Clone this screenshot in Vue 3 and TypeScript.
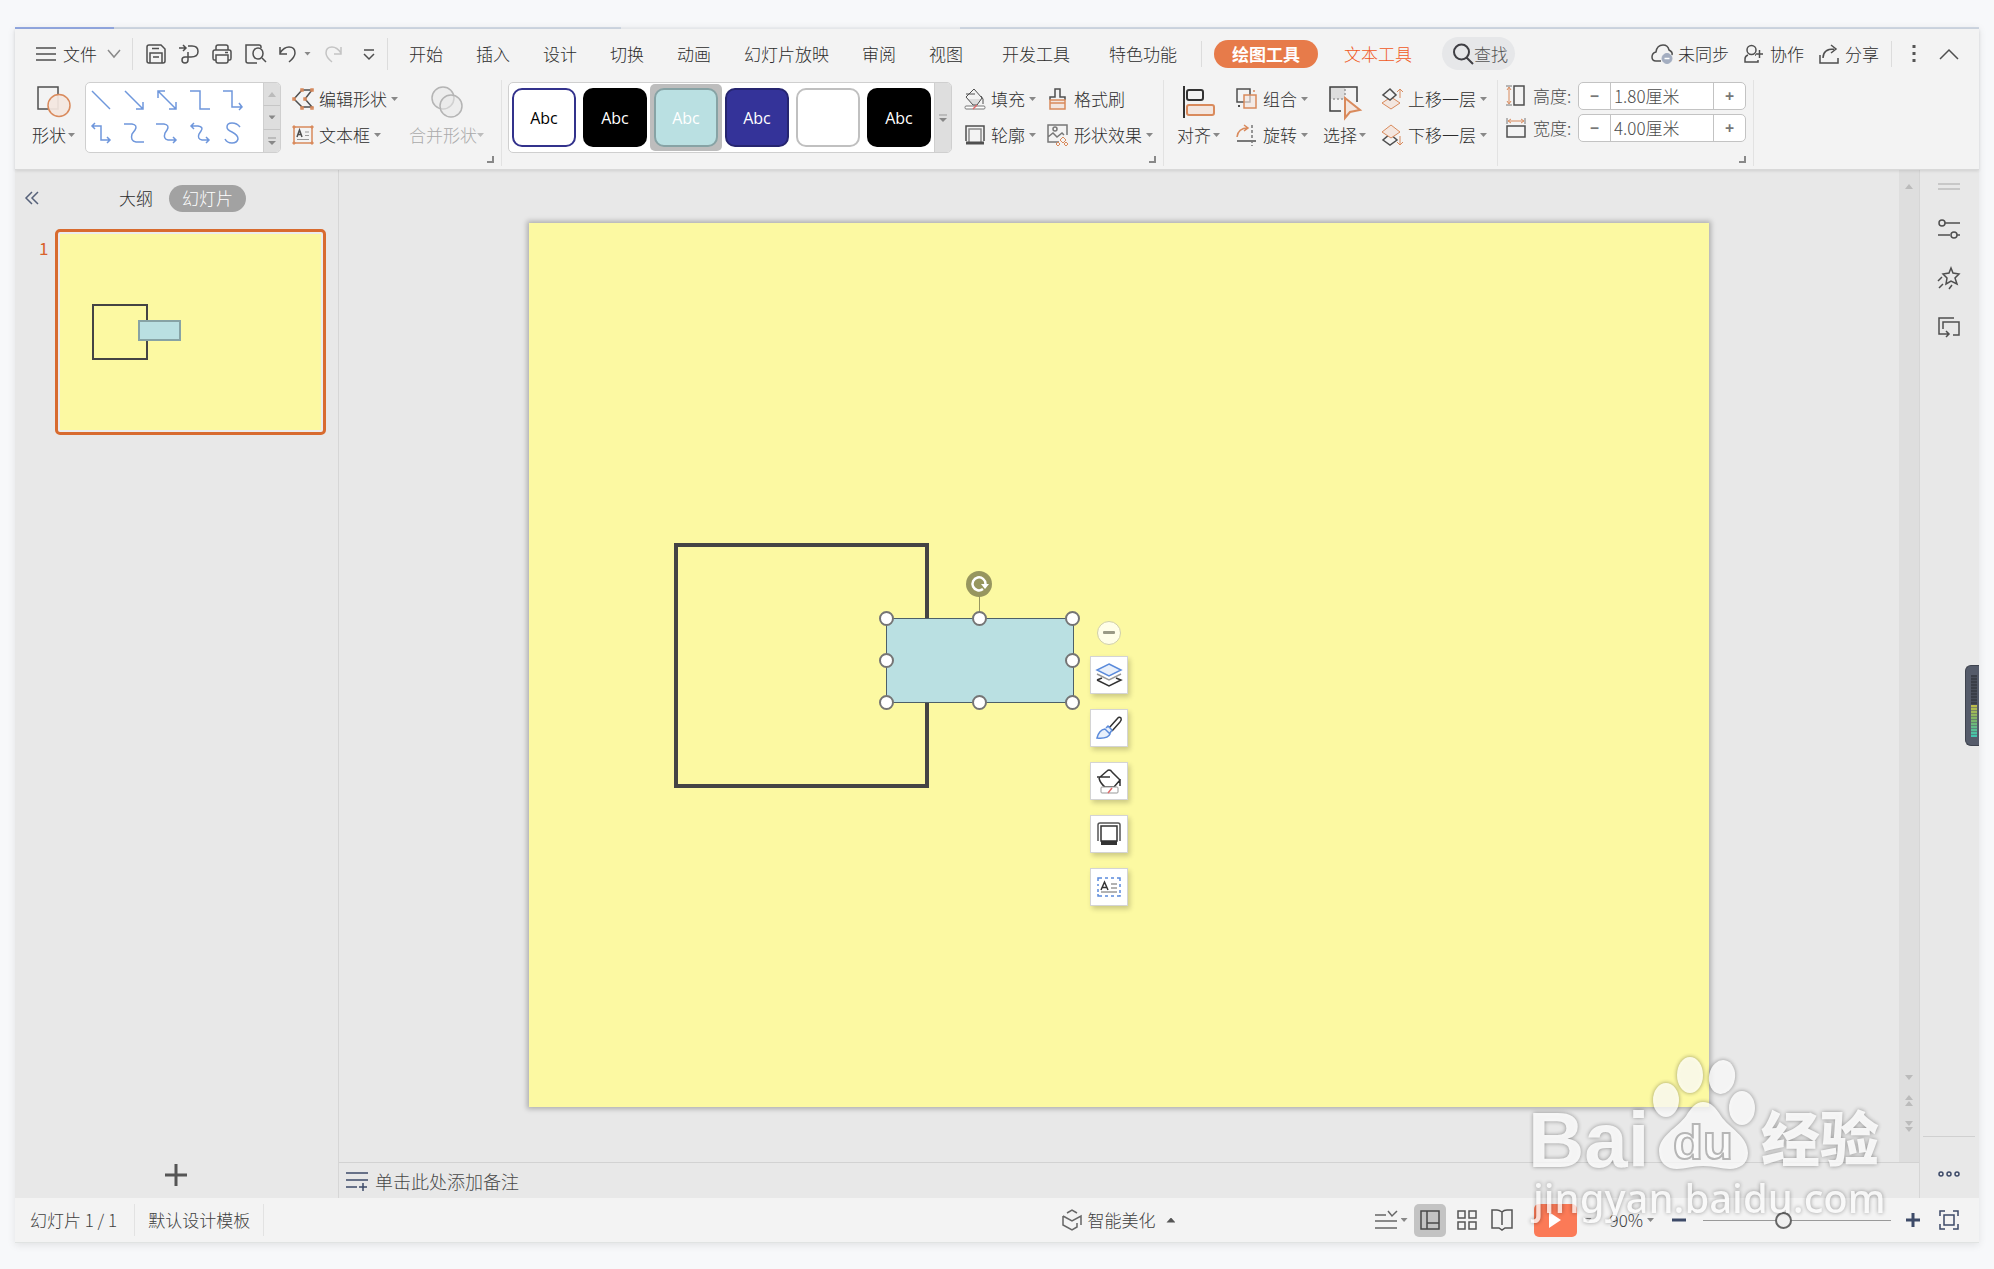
<script setup lang="ts">
import { h, ref } from 'vue'

type Shape = { d: string; s?: string; f?: string; w?: number; dash?: string }
type Glyph = { w: number; h: number; p: Shape[] }

const ink = '#4f4f4f'
const navy = '#3d4a68'
const org = '#d98a5c'
const blush = '#f3e6df'
const blue = '#6f97dc'
const dim = '#b4b4b4'

const glyphs: Record<string, Glyph> = {
  menu: { w: 20, h: 16, p: [{ d: 'M0 2H20M0 8H20M0 14H20' }] },
  chevDown: { w: 14, h: 10, p: [{ d: 'M1 1L7 8L13 1', s: '#8a8a8a' }] },
  save: { w: 20, h: 20, p: [{ d: 'M3 1H15L19 5V17Q19 19 17 19H3Q1 19 1 17V3Q1 1 3 1ZM4 19V9H16V19M6 4.500H13M7 13H13' }] },
  export: { w: 20, h: 20, p: [{ d: 'M0 4H7M4 1L7 4L4 7M9 2H13Q19 2 19 7.500Q19 13 12 13H6Q3 13 3 16Q3 19 6 19Q9 19 9 16V8' }] },
  print: { w: 20, h: 20, p: [{ d: 'M4 6V3Q4 1 6 1H14Q16 1 16 3V6M4 16H2Q1 16 1 14V8Q1 6 3 6H17Q19 6 19 8V14Q19 16 18 16H16M4 11H16V17Q16 19 14 19H6Q4 19 4 17ZM13 8.500H16' }] },
  preview: { w: 21, h: 20, p: [{ d: 'M16 4V3Q16 1 14 1H1V17Q1 19 3 19H12M17 14L21 18' }, { d: 'M8 9.500A5 5.500 0 1 0 18 9.500A5 5.500 0 1 0 8 9.500Z' }] },
  undo: { w: 18, h: 18, p: [{ d: 'M1 2V9H8M1 8Q5 2 10 2Q16 2 16 8Q16 12 10 17' }] },
  redo: { w: 18, h: 18, p: [{ d: 'M17 2V9H10M17 8Q13 2 8 2Q2 2 2 8Q2 12 8 17', s: '#c4c4c4' }] },
  more: { w: 12, h: 12, p: [{ d: 'M1 2H11M1 6L6 11L11 6' }] },
  search: { w: 22, h: 22, p: [{ d: 'M2 9A7.500 7.500 0 1 0 17 9A7.500 7.500 0 1 0 2 9ZM14.500 14.500L21 21', s: '#3f3f44', w: 2 }] },
  cloud: { w: 23, h: 20, p: [{ d: 'M10 17H5Q1 17 1 13Q1 9 5 8Q6 1 12 1Q17 1 18 6Q22 8 21 11' }, { d: 'M11 14.500A5 5 0 1 0 21 14.500A5 5 0 1 0 11 14.500Z', s: '#a3adc0', f: '#a3adc0', w: 1 }, { d: 'M13.500 14.500H18.500', s: '#fff' }] },
  collab: { w: 19, h: 20, p: [{ d: 'M3 6A4.500 4.500 0 1 0 12 6A4.500 4.500 0 1 0 3 6ZM4 11Q1 12 1 15V18H14V16M11 11H12M15.500 6V14M12 10H19' }] },
  share: { w: 20, h: 20, p: [{ d: 'M1 11V19H19V14M4 14Q4 5 15 5M12 1L17 5L12 9' }] },
  kebab: { w: 4, h: 18, p: [{ d: 'M2 0V3M2 7V10M2 14V17', w: 3, s: '#555' }] },
  chevUp: { w: 20, h: 12, p: [{ d: 'M1 11L10 2L19 11' }] },
  shape: { w: 34, h: 32, p: [{ d: 'M1 1H21V23H1Z' }, { d: 'M11 19.500A11 11 0 1 0 33 19.500A11 11 0 1 0 11 19.500Z', s: org, f: '#f3e6dfee' }] },
  editShape: { w: 22, h: 22, p: [{ d: 'M10 2H20L13 11L20 19H10L2 11Z' }, { d: 'M9 1H11V3H9ZM19 1H21V3H19ZM1 10H3V12H1ZM12 10H14V12H12ZM9 19H11V21H9ZM19 19H21V21H19Z', s: org }] },
  textBox: { w: 22, h: 20, p: [{ d: 'M2 2H20V18H2Z', s: org }, { d: 'M1 1H3V3H1ZM19 1H21V3H19ZM1 17H3V19H1ZM19 17H21V19H19Z', s: org, f: org, w: 1 }, { d: 'M5 12L7.500 5L10 12M6 9.500H9' }, { d: 'M13 7H17M13 10.500H17M5 14.500H17', s: '#999', w: 1 }] },
  merge: { w: 32, h: 32, p: [{ d: 'M1 12A11 11 0 1 0 23 12A11 11 0 1 0 1 12Z', s: dim, f: '#e8e8e888' }, { d: 'M9 20A11 11 0 1 0 31 20A11 11 0 1 0 9 20Z', s: dim, f: '#e8e8e888' }] },
  fill: { w: 22, h: 22, p: [{ d: 'M3 11H18L13 17H9Z', s: 'none', f: '#ddd' }, { d: 'M10 1L2 9L9 17H13L18 10ZM2 6H11M17 8Q20 10 19 16', w: 1 }, { d: 'M2 18H20Q21 18 21 19.500Q21 21 20 21H2Q1 21 1 19.500Q1 18 2 18Z', s: '#777', f: '#fff', w: 1 }, { d: 'M9 21L13 17', s: '#e06a6a' }] },
  brush: { w: 22, h: 22, p: [{ d: 'M3 12V9H8V1H13V9H18V12' }, { d: 'M3 12H18V21H3ZM3 15H18', s: org, f: blush }] },
  outline: { w: 22, h: 20, p: [{ d: 'M2 16V1H20V16' }, { d: 'M5 17V4H17V17', s: '#888' }, { d: 'M2 18H20', w: 3 }] },
  effect: { w: 22, h: 22, p: [{ d: 'M12 18H1V1H20V11M1 13L6 9L10 13L15 9L17 11', s: '#777' }, { d: 'M6 5A2 2 0 1 0 10 5A2 2 0 1 0 6 5Z', s: '#777' }, { d: 'M16 13L19 16L16 19L13 16ZM11 18L13 20L11 22L9 20ZM19 18L21 20L19 22L17 20Z', s: org, w: 1 }] },
  align: { w: 32, h: 34, p: [{ d: 'M1 1V33', w: 2, s: '#333' }, { d: 'M6 5H18Q20 5 20 7V13Q20 15 18 15H6Q4 15 4 13V7Q4 5 6 5Z', s: '#333', w: 2 }, { d: 'M6 20H29Q31 20 31 22V28Q31 30 29 30H6Q4 30 4 28V22Q4 20 6 20Z', s: org, f: blush, w: 2 }] },
  group: { w: 22, h: 22, p: [{ d: 'M1 1H14V14H1Z' }, { d: 'M8 7H20V20H8Z', s: org, f: '#f3e6dfaa' }, { d: 'M18 2V4', s: org }, { d: 'M3 17V19', w: 2 }] },
  rotate: { w: 22, h: 22, p: [{ d: 'M1 13Q2 4 12 4M8 1L12 4L8 7', s: org }, { d: 'M1 17H20' }, { d: 'M16 1V22', s: '#777', dash: '3 2' }] },
  select: { w: 34, h: 34, p: [{ d: 'M2 2H17V14H2Z', s: 'none', f: '#ddd' }, { d: 'M13 26H2V2H29V17', s: '#3f3f3f' }, { d: 'M17 4V14H3', s: '#999', dash: '2 2' }, { d: 'M17 13V33L22 27L32 25Z', s: org, f: blush, w: 2 }] },
  forward: { w: 22, h: 22, p: [{ d: 'M10 9L19 15L10 21L1 15Z', s: org, f: blush, w: 1 }, { d: 'M9 1L15 7L9 12L2 7Z', f: '#f3f3f3' }, { d: 'M19 10V1M16 4L19 1L22 4', s: org, w: 1 }] },
  backward: { w: 22, h: 22, p: [{ d: 'M9 10L16 16L9 21L2 16Z' }, { d: 'M10 1L19 8L10 14L1 8Z', s: org, f: blush, w: 1 }, { d: 'M19 12V21M16 18L19 21L22 18', s: org, w: 1 }] },
  height: { w: 20, h: 22, p: [{ d: 'M8 1H18V20H8Z' }, { d: 'M3 3V18M1 5L3 2L5 5M1 16L3 19L5 16', s: org, w: 1 }, { d: 'M0 1H6M0 20H6', s: '#777', w: 1 }] },
  width: { w: 20, h: 22, p: [{ d: 'M1 9H19V20H1Z' }, { d: 'M3 4H17M5 2L2 4L5 6M15 2L18 4L15 6', s: org, w: 1 }, { d: 'M1 1V7M19 1V7', s: '#777', w: 1 }] },
  collapse: { w: 14, h: 14, p: [{ d: 'M7 1L1 7L7 13M13 1L7 7L13 13', s: '#56617a' }] },
  add: { w: 22, h: 22, p: [{ d: 'M11 0V22M0 11H22', s: '#555', w: 3 }] },
  notes: { w: 22, h: 20, p: [{ d: 'M0 2H22M0 9H22M0 16H11M13 16H21M17 12V20', s: navy }] },
  grip: { w: 22, h: 8, p: [{ d: 'M0 1H22M0 6H22', s: '#c8c8c8', w: 2 }] },
  sliders: { w: 22, h: 18, p: [{ d: 'M7 3H22M1 3A3 3 0 1 0 7 3A3 3 0 1 0 1 3ZM0 15H12M13 15A3 3 0 1 0 19 15A3 3 0 1 0 13 15ZM19 15H22' }] },
  star: { w: 22, h: 22, p: [{ d: 'M13 1L15 6L21 7L17 11L19 17L13 14L8 17L9 11L5 7L11 6Z' }, { d: 'M0 14L4 10M1 21L5 17M11 22L14 18' }] },
  screens: { w: 22, h: 20, p: [{ d: 'M16 1H1V17H11M8 14L11 17L8 20M5 12V5H21V18H15' }] },
  dots: { w: 22, h: 8, p: [{ d: 'M1 4A2 2 0 1 0 5 4A2 2 0 1 0 1 4ZM9 4A2 2 0 1 0 13 4A2 2 0 1 0 9 4ZM17 4A2 2 0 1 0 21 4A2 2 0 1 0 17 4Z', s: navy }] },
  magic: { w: 20, h: 22, p: [{ d: 'M5 4L10 1L15 4M1 7L10 12L19 7V16M1 7V16L10 21L15 18V14', s: '#666' }] },
  notesView: { w: 22, h: 20, p: [{ d: 'M0 5H11M13 1L17 6L22 1M0 11H22M0 18H22', s: '#666' }] },
  normalView: { w: 20, h: 20, p: [{ d: 'M1 1H19V19H1ZM7 1V19M7 13H19', s: '#4a4a4a' }] },
  gridView: { w: 20, h: 20, p: [{ d: 'M1 1H8V8H1ZM12 1H19V8H12ZM1 12H8V19H1ZM12 12H19V19H12Z', s: '#555' }] },
  readView: { w: 22, h: 22, p: [{ d: 'M11 3Q8 1 6 1H1V19H8L11 21L14 19H21V1H16Q13 1 11 3V16', s: '#555' }] },
  play: { w: 14, h: 18, p: [{ d: 'M1 1L13 9L1 17Z', s: 'none', f: '#fff' }] },
  minus: { w: 14, h: 14, p: [{ d: 'M0 7H14', s: navy, w: 3 }] },
  plus: { w: 14, h: 14, p: [{ d: 'M0 7H14M7 0V14', s: navy, w: 3 }] },
  fit: { w: 20, h: 20, p: [{ d: 'M1 6V1H6M14 1H19V6M19 14V19H14M6 19H1V14M5 5H15V15H5Z', s: navy }] },
  upTri: { w: 8, h: 5, p: [{ d: 'M0 5L4 0L8 5Z', s: 'none', f: '#bbb' }] },
  downTri: { w: 8, h: 5, p: [{ d: 'M0 0L4 5L8 0Z', s: 'none', f: '#bbb' }] },
  upTri2: { w: 8, h: 11, p: [{ d: 'M0 5L4 0L8 5ZM0 11L4 6L8 11Z', s: 'none', f: '#bbb' }] },
  downTri2: { w: 8, h: 11, p: [{ d: 'M0 0L4 5L8 0ZM0 6L4 11L8 6Z', s: 'none', f: '#bbb' }] },
  dropAll: { w: 8, h: 8, p: [{ d: 'M0 1H8', s: '#999', w: 1 }, { d: 'M0 4L4 8L8 4Z', s: 'none', f: '#888' }] },
  launcher: { w: 7, h: 7, p: [{ d: 'M6 0V6H0', s: '#888', w: 2 }] },
  layers: { w: 26, h: 26, p: [{ d: 'M1 18L13 24L25 18L20 16M6 16L1 18', s: '#333' }, { d: 'M1 12L13 18L25 12', s: '#999' }, { d: 'M13 2L25 8L13 14L1 8Z', s: '#5b8bdb', f: '#e9f0fb' }] },
  paint: { w: 26, h: 26, p: [{ d: 'M13 13L21 4Q23 1 25 3Q26 5 24 7L16 16', s: '#333' }, { d: 'M1 23Q3 15 9 14L14 19Q12 24 1 23ZM10 13L12 11L16 15L14 18', s: '#5b8bdb', f: '#e9f0fb' }] },
  pour: { w: 26, h: 26, p: [{ d: 'M13 2Q15 2 16 4L24 12L18 19H9Q4 15 3 10M3 10L11 3Q12 2 13 2M24 11V18M1 9H14', s: '#333' }, { d: 'M6 19H21Q22 19 22 20V24Q22 25 21 25H6Q5 25 5 24V20Q5 19 6 19Z', s: '#999', f: '#fff', w: 1 }, { d: 'M12 25L16 20', s: '#e06a6a' }] },
  frame: { w: 26, h: 26, p: [{ d: 'M2 20V4Q2 2 4 2H22Q24 2 24 4V20', s: '#555' }, { d: 'M5 5H21V20H5Z', s: '#333' }, { d: 'M5 22H21', s: '#333', w: 4 }] },
  caption: { w: 26, h: 26, p: [{ d: 'M2 7V4H6M9 4H12M15 4H18M21 4H24V7M24 10V13M24 16V19M24 21V22H21M18 22H15M12 22H9M6 22H2V20M2 18V15M2 12V10', s: '#5b8bdb' }, { d: 'M5 16L8.500 8L12 16M6 13.500H11', s: '#333' }, { d: 'M15 10H21M15 14H21M5 18H21', s: '#999' }] },
  line: { w: 20, h: 20, p: [{ d: 'M1 1L19 19', s: blue }] },
  arrow: { w: 20, h: 20, p: [{ d: 'M1 1L19 19M12 19H19V12', s: blue }] },
  dblArrow: { w: 20, h: 20, p: [{ d: 'M1 1L19 19M12 19H19V12M8 1H1V8', s: blue }] },
  elbow: { w: 20, h: 20, p: [{ d: 'M0 1H10V19H20', s: blue }] },
  elbowArrow: { w: 20, h: 20, p: [{ d: 'M0 1H9V17H19M16 13L19 17L16 20', s: blue }] },
  elbowDbl: { w: 20, h: 22, p: [{ d: 'M1 4H10V18H19M4 1L1 4L4 7M16 15L19 18L16 21', s: blue }] },
  curve: { w: 20, h: 20, p: [{ d: 'M0 1H8Q14 2 11 7L8 11Q6 18 12 19H20', s: blue }] },
  curveArrow: { w: 22, h: 22, p: [{ d: 'M0 2H8Q14 3 11 8L9 11Q7 17 12 18H20M17 15L20 18L17 21', s: blue }] },
  curveDbl: { w: 20, h: 22, p: [{ d: 'M1 4H8Q14 5 11 9L9 12Q7 17 12 18H19M4 1L1 4L4 7M16 15L19 18L16 21', s: blue }] },
  scurve: { w: 20, h: 22, p: [{ d: 'M17 5Q14 1 9 1Q4 1 4 5Q4 8 9 10Q15 13 15 17Q14 21 9 21Q4 21 2 17', s: blue }] },
}

const Icon = (props: { n: string }) => {
  const g = glyphs[props.n]
  return h(
    'svg',
    { width: g.w, height: g.h, viewBox: `0 0 ${g.w} ${g.h}`, fill: 'none', 'aria-hidden': 'true', class: 'icon' },
    g.p.map((q) => h('path', { d: q.d, stroke: q.s ?? ink, fill: q.f ?? 'none', 'stroke-width': q.w ?? 1.5, 'stroke-dasharray': q.dash })),
  )
}

const tabs = ['开始', '插入', '设计', '切换', '动画', '幻灯片放映', '审阅', '视图']
const extraTabs = ['开发工具', '特色功能']
const lines = ['line', 'arrow', 'dblArrow', 'elbow', 'elbowArrow', 'elbowDbl', 'curve', 'curveArrow', 'curveDbl', 'scurve']
const presets = ['outlined', 'black', 'teal', 'indigo', 'blank', 'black']
const floatTools = [
  { n: 'layers', t: '叠放次序' },
  { n: 'paint', t: '形状样式' },
  { n: 'pour', t: '形状填充' },
  { n: 'frame', t: '形状轮廓' },
  { n: 'caption', t: '文字' },
]
const handles = ['h-nw', 'h-n', 'h-ne', 'h-w', 'h-e', 'h-sw', 'h-s', 'h-se']
const shapeHeight = ref('1.80厘米')
const shapeWidth = ref('4.00厘米')
const zoom = ref(42)
</script>

<template>
  <div class="page">
    <div class="window">
      <div class="edge"><i class="e1"></i><i class="e2"></i><i class="e3"></i><i class="e4"></i></div>
      <header class="top">
        <nav class="tabs">
          <button class="file"><Icon n="menu" /><span>文件</span><Icon n="chevDown" /></button>
          <i class="vr tall"></i>
          <div class="quick">
            <button aria-label="保存"><Icon n="save" /></button>
            <button aria-label="输出"><Icon n="export" /></button>
            <button aria-label="打印"><Icon n="print" /></button>
            <button aria-label="预览"><Icon n="preview" /></button>
            <button aria-label="撤销" class="undo"><Icon n="undo" /><i class="caret"></i></button>
            <button aria-label="恢复" class="redo"><Icon n="redo" /></button>
            <button aria-label="更多" class="more"><Icon n="more" /></button>
          </div>
          <i class="vr tall"></i>
          <div class="tabset">
            <button v-for="t in tabs" :key="t">{{ t }}</button>
          </div>
          <div class="tabset extra">
            <button v-for="t in extraTabs" :key="t">{{ t }}</button>
          </div>
          <i class="vr mid"></i>
          <button class="pill">绘图工具</button>
          <button class="texttool">文本工具</button>
          <label class="search"><Icon n="search" /><input type="text" placeholder="查找" aria-label="查找" /></label>
          <div class="right">
            <button><Icon n="cloud" />未同步</button>
            <button class="collab"><Icon n="collab" />协作</button>
            <button class="share"><Icon n="share" />分享</button>
            <i class="vr"></i>
            <button aria-label="选项"><Icon n="kebab" /></button>
            <button aria-label="收起功能区" class="fold"><Icon n="chevUp" /></button>
          </div>
        </nav>

        <div class="ribbon">
          <section class="grp ga">
            <button class="big"><span class="bi"><Icon n="shape" /></span><span class="bt">形状<i class="caret"></i></span></button>
            <div class="lines">
              <div class="linegrid">
                <button v-for="l in lines" :key="l" :aria-label="l"><Icon :n="l" /></button>
              </div>
              <div class="spin">
                <button aria-label="上"><Icon n="upTri" /></button>
                <button aria-label="下"><i class="caret"></i></button>
                <button aria-label="全部"><Icon n="dropAll" /></button>
              </div>
            </div>
            <div class="col c1">
              <button class="row"><span class="ic"><Icon n="editShape" /></span>编辑形状<i class="caret"></i></button>
              <button class="row"><span class="ic"><Icon n="textBox" /></span>文本框<i class="caret"></i></button>
            </div>
            <button class="big wide" disabled><span class="bi"><Icon n="merge" /></span><span class="bt">合并形状<i class="caret"></i></span></button>
            <button class="launch" aria-label="形状选项"><Icon n="launcher" /></button>
          </section>

          <section class="grp gb">
            <div class="presets">
              <div class="swatches">
                <button v-for="(p, i) in presets" :key="i" :class="['preset', p]">{{ p === 'blank' ? '' : 'Abc' }}</button>
              </div>
              <button class="all" aria-label="全部样式"><Icon n="dropAll" /></button>
            </div>
            <div class="col c1">
              <button class="row"><span class="ic"><Icon n="fill" /></span>填充<i class="caret"></i></button>
              <button class="row"><span class="ic"><Icon n="outline" /></span>轮廓<i class="caret"></i></button>
            </div>
            <div class="col c1">
              <button class="row"><span class="ic"><Icon n="brush" /></span>格式刷</button>
              <button class="row"><span class="ic"><Icon n="effect" /></span>形状效果<i class="caret"></i></button>
            </div>
            <button class="launch" aria-label="样式选项"><Icon n="launcher" /></button>
          </section>

          <section class="grp gc">
            <button class="big"><span class="bi"><Icon n="align" /></span><span class="bt">对齐<i class="caret"></i></span></button>
            <div class="col c2">
              <button class="row"><span class="ic"><Icon n="group" /></span>组合<i class="caret"></i></button>
              <button class="row"><span class="ic"><Icon n="rotate" /></span>旋转<i class="caret"></i></button>
            </div>
            <button class="big c3"><span class="bi"><Icon n="select" /></span><span class="bt">选择<i class="caret"></i></span></button>
            <div class="col c3">
              <button class="row"><span class="ic"><Icon n="forward" /></span>上移一层<i class="caret"></i></button>
              <button class="row"><span class="ic"><Icon n="backward" /></span>下移一层<i class="caret"></i></button>
            </div>
          </section>

          <section class="grp gd">
            <div class="size">
              <span class="ic"><Icon n="height" /></span><label for="sh">高度:</label>
              <div class="num"><button aria-label="减小高度">−</button><input id="sh" v-model="shapeHeight" type="text" /><button aria-label="增大高度">+</button></div>
            </div>
            <div class="size">
              <span class="ic"><Icon n="width" /></span><label for="sw">宽度:</label>
              <div class="num"><button aria-label="减小宽度">−</button><input id="sw" v-model="shapeWidth" type="text" /><button aria-label="增大宽度">+</button></div>
            </div>
            <button class="launch" aria-label="大小选项"><Icon n="launcher" /></button>
          </section>
        </div>
      </header>

      <main class="body">
        <aside class="side">
          <div class="sidehead">
            <button aria-label="收起"><Icon n="collapse" /></button>
            <button class="outlinetab">大纲</button>
            <button class="slidetab">幻灯片</button>
          </div>
          <div class="thumbrow">
            <span class="no">1</span>
            <button class="thumb" aria-label="幻灯片 1">
              <svg viewBox="0 0 261 196" preserveAspectRatio="none" aria-hidden="true">
                <rect width="261" height="196" fill="#fcf9a2" />
                <rect x="33" y="71" width="54" height="54" fill="none" stroke="#444" stroke-width="2" />
                <rect x="79" y="87" width="41" height="19" fill="#bae0e2" stroke="#87a3a5" stroke-width="2" />
              </svg>
            </button>
          </div>
          <button class="addslide" aria-label="新建幻灯片"><Icon n="add" /></button>
        </aside>

        <section class="work">
          <div class="stagewrap">
            <div class="stage">
              <div class="slide">
                <div class="square"></div>
                <div class="rect">
                  <i class="stem"></i>
                  <svg class="rot" width="26" height="26" viewBox="0 0 26 26" aria-hidden="true">
                    <circle cx="13" cy="13" r="13" fill="#97965f" />
                    <path d="M17 18A6.500 6.500 0 1 1 19.500 13" fill="none" stroke="#fff" stroke-width="2.500" />
                    <path d="M15 13H23L19 18Z" fill="#fff" />
                  </svg>
                  <i v-for="k in handles" :key="k" :class="['hd', k]"></i>
                </div>
                <div class="float">
                  <button class="fold2" aria-label="收起工具"><i></i></button>
                  <button v-for="f in floatTools" :key="f.n" class="ft" :aria-label="f.t"><Icon :n="f.n" /></button>
                </div>
              </div>
            </div>
            <div class="scroll">
              <Icon n="upTri" />
              <div class="scrollend"><Icon n="downTri" /><Icon n="upTri2" /><Icon n="downTri2" /></div>
            </div>
          </div>
          <div class="notes"><Icon n="notes" /><span>单击此处添加备注</span></div>
        </section>

        <aside class="rail">
          <Icon n="grip" />
          <button aria-label="属性"><Icon n="sliders" /></button>
          <button aria-label="动画窗格"><Icon n="star" /></button>
          <button aria-label="切换窗格"><Icon n="screens" /></button>
          <button class="raildots" aria-label="更多"><Icon n="dots" /></button>
          <div class="meter"><i class="off"></i><i class="on"></i></div>
        </aside>
      </main>

      <footer class="status">
        <span class="cell">幻灯片 1 / 1</span>
        <span class="cell second">默认设计模板</span>
        <i class="grow4"></i>
        <button class="magic"><Icon n="magic" />智能美化<i class="caret up"></i></button>
        <i class="grow1"></i>
        <div class="views">
          <button class="nv" aria-label="备注"><Icon n="notesView" /><i class="caret"></i></button>
          <button class="active" aria-label="普通视图"><Icon n="normalView" /></button>
          <button class="gv" aria-label="浏览视图"><Icon n="gridView" /></button>
          <button class="rv" aria-label="阅读视图"><Icon n="readView" /></button>
          <button class="play" aria-label="放映"><Icon n="play" /></button>
          <i class="caret pc"></i>
          <button class="pct">90%<i class="caret"></i></button>
          <button aria-label="缩小"><Icon n="minus" /></button>
          <input v-model="zoom" class="range" type="range" min="0" max="100" aria-label="缩放" />
          <button aria-label="放大"><Icon n="plus" /></button>
          <button class="fit" aria-label="适应窗口"><Icon n="fit" /></button>
        </div>
      </footer>

      <svg class="mark" width="370" height="190" viewBox="0 0 370 190" aria-hidden="true">
        <text class="latin" x="3" y="117">Bai</text>
        <ellipse cx="141" cy="50" rx="13" ry="17" />
        <ellipse cx="165" cy="25" rx="13" ry="18" />
        <ellipse cx="197" cy="27" rx="13" ry="17" transform="rotate(10 197 27)" />
        <ellipse cx="217" cy="58" rx="13" ry="17" />
        <path d="M178 52C186 52 191 58 196 66C204 78 223 86 223 103C223 114 214 119 205 119C196 119 190 116 178 116C167 116 161 119 152 119C142 119 134 113 134 101C134 86 152 78 161 66C166 58 171 52 178 52Z" />
        <text class="du" x="148" y="109">du</text>
        <text class="cjk" x="236" y="111">经验</text>
        <text class="url" x="8" y="163">jingyan.baidu.com</text>
      </svg>
    </div>
  </div>
</template>

<style>
body {
  margin: 0;
  background: #f7f8fa;
}
.icon {
  display: block;
  flex: none;
  overflow: visible;
}
</style>

<style scoped>
* {
  box-sizing: border-box;
}
.page {
  min-height: 100vh;
  display: flex;
  padding: 27px 15px 26px;
  background: #f7f8fa;
  font-family: 'Noto Sans CJK SC', sans-serif;
  font-weight: 300;
  font-size: 17px;
  line-height: 24px;
  color: #2c2c2c;
}
button,
input {
  font: inherit;
  color: inherit;
  margin: 0;
  padding: 0;
  border: 0;
  background: none;
  outline: none;
}
button {
  display: flex;
  align-items: center;
  flex: none;
  white-space: nowrap;
}
.window {
  position: relative;
  flex: 1;
  min-width: 0;
  display: flex;
  flex-direction: column;
  background: #e8e8e8;
  box-shadow: 0 2px 8px #00000018;
}
.edge {
  display: flex;
  height: 2px;
}
.e1 { width: 99px; background: #91a6de; }
.e2 { width: 507px; background: #cdd5e0; }
.e3 { width: 339px; background: #e9ebee; }
.e4 { flex: 1; background: #cdd5e0; }
.top {
  background: #f3f3f3;
  border-bottom: 1px solid #d8d8d8;
  box-shadow: 0 1px 3px #0000001c;
  z-index: 1;
}
.tabs {
  display: flex;
  align-items: center;
  height: 51px;
  padding-left: 21px;
  padding-bottom: 2px;
}
.vr {
  width: 1px;
  height: 26px;
  background: #dcdcdc;
  flex: none;
}
.vr.tall { height: 32px; }
.caret {
  flex: none;
  width: 7px;
  height: 4px;
  margin-left: 4px;
  background: #888;
  clip-path: polygon(0 0, 100% 0, 50% 100%);
}
.caret.up {
  width: 9px;
  height: 5px;
  margin-left: 11px;
  background: #555;
  clip-path: polygon(50% 0, 100% 100%, 0 100%);
}
.file span { margin: 0 10px 0 7px; }
.file { margin-right: 11px; }
.quick {
  display: flex;
  align-items: center;
  gap: 13px;
  padding: 0 12px 0 13px;
}
.undo .caret { margin-left: 7px; }
.more { margin-left: 8px; }
.tabset {
  display: flex;
  gap: 33px;
  margin-left: 21px;
}
.tabset.extra {
  gap: 39px;
  margin: 0 24px 0 39px;
}
.pill {
  height: 28px;
  margin-left: 12px;
  padding: 0 18px;
  border-radius: 14px;
  background: #e77b4a;
  color: #fff;
  font-weight: 700;
}
.texttool {
  margin-left: 26px;
  color: #f0581c;
}
.search {
  display: flex;
  align-items: center;
  width: 73px;
  height: 33px;
  margin-left: 30px;
  padding-left: 10px;
  border-radius: 17px;
  background: #e6e7e9;
}
.search input {
  width: 38px;
  height: 24px;
}
.search input::placeholder {
  color: #555;
  opacity: 1;
}
.right {
  display: flex;
  align-items: center;
  gap: 15px;
  margin-left: auto;
  padding-right: 20px;
}
.right button { gap: 4px; }
.right .collab { gap: 7px; }
.right .share { gap: 6px; }
.right .vr { margin: 0 5px 0 -3px; }
.right .fold { margin-left: 8px; }

.ribbon {
  display: flex;
  height: 89px;
}
.grp {
  position: relative;
  display: flex;
  flex: none;
  height: 86px;
  padding-top: 2px;
  border-right: 1px solid #e2e2e2;
}
.ga { padding-left: 17px; padding-right: 17px; }
.gb { padding-left: 6px; padding-right: 10px; }
.gc { padding-left: 13px; padding-right: 10px; }
.gd {
  flex-direction: column;
  gap: 4px;
  padding-left: 8px;
  padding-right: 7px;
}
.launch {
  position: absolute;
  right: 7px;
  bottom: 3px;
}
.big {
  width: 43px;
  flex-direction: column;
  align-items: center;
}
.big.wide {
  width: 75px;
  margin-left: 11px;
}
.big:disabled { color: #aaa; }
.big:disabled .caret { background: #bdbdbd; }
.bi {
  display: flex;
  align-items: center;
  justify-content: center;
  height: 40px;
}
.bt {
  display: flex;
  align-items: center;
  margin-top: 1px;
}
.bt .caret { margin-left: 2px; }
.big.wide .caret { margin-left: 0; }
.col {
  display: flex;
  flex-direction: column;
  margin-top: -1px;
}
.c1 { margin-left: 11px; }
.c2 { margin-left: 16px; }
.c3 { margin-left: 15px; }
.gb .presets + .c1 { margin-left: 12px; }
.row { height: 36px; }
.ic {
  display: flex;
  justify-content: center;
  flex: none;
  width: 22px;
  margin-right: 5px;
}
.lines {
  display: flex;
  width: 196px;
  height: 71px;
  margin-left: 10px;
  border: 1px solid #cfcfcf;
  border-radius: 5px;
  background: #fff;
  overflow: hidden;
}
.linegrid {
  flex: 1;
  display: grid;
  grid-template-columns: repeat(5, 33px);
  grid-template-rows: 33px 33px;
  margin-left: -2px;
}
.linegrid button { justify-content: center; }
.spin {
  display: flex;
  flex-direction: column;
  width: 17px;
  background: #dedede;
}
.spin button {
  flex: 1;
  width: 100%;
  justify-content: center;
  border-left: 1px solid #cfcfcf;
}
.spin button + button { border-top: 1px solid #c6c6c6; }
.spin .caret { margin: 0; }
.presets {
  display: flex;
  width: 444px;
  height: 71px;
  border: 1px solid #cfcfcf;
  border-radius: 5px;
  background: #fff;
  overflow: hidden;
}
.swatches {
  position: relative;
  z-index: 0;
  flex: 1;
  display: flex;
  gap: 7px;
  padding: 5px 3px;
}
.preset {
  width: 64px;
  height: 59px;
  justify-content: center;
  border: 2px solid transparent;
  border-radius: 10px;
  font: 400 16px/24px 'Open Sans', 'Noto Sans', sans-serif;
}
.outlined { border-color: #33328c; color: #000; }
.black { background: #000; color: #fff; }
.teal {
  position: relative;
  background: #bae0e2;
  border-color: #87a3a5;
  color: #fff;
}
.teal::before {
  content: '';
  position: absolute;
  inset: -6px;
  z-index: -1;
  border-radius: 5px;
  background: #bdbdbd;
}
.indigo { background: #343399; border-color: #262570; color: #fff; }
.blank { border-color: #c0c0c0; }
.all {
  width: 17px;
  justify-content: center;
  border-left: 1px solid #cfcfcf;
  background: #dedede;
}
.size {
  display: flex;
  align-items: center;
  height: 28px;
  color: #4c4c4c;
}
.size .ic { justify-content: flex-start; }
.size label { width: 45px; }
.num {
  display: flex;
  width: 168px;
  height: 28px;
  border: 1px solid #c3c3c3;
  border-radius: 5px;
  background: #fff;
}
.num button {
  width: 31px;
  justify-content: center;
  font: 700 16px/24px 'Noto Sans', sans-serif;
  color: #777;
}
.num input {
  flex: 1;
  min-width: 0;
  padding-left: 3px;
  border: 1px solid #c3c3c3;
  border-width: 0 1px;
}

.body {
  flex: 1;
  display: flex;
  min-height: 0;
}
.side {
  width: 324px;
  flex: none;
  display: flex;
  flex-direction: column;
  border-right: 1px solid #d6d6d6;
}
.sidehead {
  display: flex;
  align-items: center;
  height: 59px;
  padding-left: 10px;
  padding-bottom: 3px;
}
.outlinetab { margin-left: 80px; }
.slidetab {
  height: 27px;
  margin-left: 16px;
  padding: 0 13px;
  border-radius: 14px;
  background: #a2a2a2;
  color: #fff;
}
.thumbrow {
  display: flex;
  padding-left: 24px;
}
.no {
  width: 16px;
  padding-top: 7px;
  font-weight: 400;
  color: #d9622b;
}
.thumb {
  width: 271px;
  height: 206px;
  padding: 2px;
  border: 3px solid #d86b2f;
  border-radius: 5px;
  background: #ececec;
}
.thumb svg {
  display: block;
  width: 100%;
  height: 100%;
}
.addslide { margin: auto auto 12px 150px; }
.work {
  flex: 1;
  min-width: 0;
  display: flex;
  flex-direction: column;
}
.stagewrap {
  flex: 1;
  display: flex;
  border-bottom: 1px solid #d2d2d2;
}
.stage {
  flex: 1;
  min-width: 0;
  display: flex;
  align-items: center;
  justify-content: center;
  padding-bottom: 3px;
}
.slide {
  position: relative;
  flex: none;
  width: 1180px;
  aspect-ratio: 295 / 221;
  background: #fcf9a2;
  box-shadow: 0 0 5px 2px #00000040;
}
.square {
  position: absolute;
  left: 145px;
  top: 320px;
  width: 255px;
  height: 245px;
  border: 4px solid #444;
}
.rect {
  position: absolute;
  left: 357px;
  top: 395px;
  width: 188px;
  height: 85px;
  border: 1px solid #4d6068;
  background: #bae0e2;
}
.stem {
  position: absolute;
  left: 92px;
  top: -24px;
  width: 1px;
  height: 24px;
  background: #97965f;
}
.rot {
  position: absolute;
  left: 79px;
  top: -48px;
}
.hd {
  position: absolute;
  width: 15px;
  height: 15px;
  border: 2px solid #757575;
  border-radius: 50%;
  background: #fff;
}
.h-nw, .h-n, .h-ne { top: -8px; }
.h-w, .h-e { top: 34px; }
.h-sw, .h-s, .h-se { top: 76px; }
.h-nw, .h-w, .h-sw { left: -8px; }
.h-n, .h-s { left: 85px; }
.h-ne, .h-e, .h-se { left: 178px; }
.float {
  position: absolute;
  left: 561px;
  top: 398px;
  display: flex;
  flex-direction: column;
  align-items: center;
  gap: 15px;
}
.fold2 {
  width: 24px;
  height: 24px;
  margin-bottom: -4px;
  justify-content: center;
  border: 1px solid #d0cfa8;
  border-radius: 50%;
  background: #fffee8;
}
.fold2 i {
  width: 12px;
  height: 3px;
  border-radius: 1px;
  background: #9a9a86;
}
.ft {
  width: 38px;
  height: 38px;
  justify-content: center;
  border: 1px solid #d4d4d4;
  background: #fff;
  box-shadow: 2px 3px 5px #00000030;
}
.scroll {
  width: 20px;
  display: flex;
  flex-direction: column;
  align-items: center;
  justify-content: space-between;
  padding: 14px 0 30px;
  background: #dedede;
}
.scrollend {
  display: flex;
  flex-direction: column;
  gap: 15px;
}
.notes {
  display: flex;
  align-items: center;
  gap: 7px;
  height: 35px;
  padding-left: 7px;
  font-size: 18px;
  color: #484848;
}
.rail {
  position: relative;
  width: 60px;
  flex: none;
  display: flex;
  flex-direction: column;
  align-items: center;
  padding-top: 13px;
  padding-right: 2px;
  border-left: 1px solid #d6d6d6;
}
.rail button {
  height: 22px;
  margin-top: 27px;
}
.rail .raildots {
  width: 52px;
  height: 62px;
  margin-top: auto;
  padding-top: 12px;
  justify-content: center;
  border-top: 1px solid #d0d0d0;
}
.meter {
  position: absolute;
  right: 0;
  top: 495px;
  width: 14px;
  height: 81px;
  padding: 9px 2px 0 5px;
  border: 1px solid #3e434e;
  border-right: 0;
  border-radius: 6px 0 0 6px;
  background: #555b6a;
}
.meter i {
  display: block;
  -webkit-mask: repeating-linear-gradient(#000 0 2px, #0007 2px 3px);
}
.off { height: 30px; background: #3a3e48; }
.on { height: 32px; background: linear-gradient(#c2bd4a, #7db467 45%, #3fc5b2); }

.status {
  display: flex;
  align-items: center;
  height: 45px;
  background: #f3f3f3;
  border-bottom: 1px solid #e0e3e2;
  color: #404040;
}
.cell {
  height: 32px;
  padding: 4px 17px 4px 15px;
  line-height: 24px;
  border-right: 1px solid #e2e2e2;
  white-space: nowrap;
}
.cell.second { padding: 4px 13px; }
.grow4 { flex: 4; }
.grow1 { flex: 1; }
.magic { margin-left: 2px; }
.magic svg { margin-right: 5px; }
.views {
  display: flex;
  align-items: center;
  padding-right: 20px;
}
.active {
  width: 32px;
  height: 33px;
  margin-left: 6px;
  justify-content: center;
  border-radius: 5px;
  background: #c3c3c3;
}
.gv { margin-left: 11px; }
.rv { margin-left: 14px; }
.play {
  width: 43px;
  height: 33px;
  margin-left: 21px;
  justify-content: center;
  border-radius: 5px;
  background: #fb7a57;
}
.pc { margin-left: 8px; }
.pct { margin: 0 18px; }
.range {
  appearance: none;
  width: 188px;
  height: 16px;
  margin: 0 15px 0 17px;
  background: linear-gradient(#999, #999) center / 100% 1px no-repeat;
}
.range::-webkit-slider-thumb {
  appearance: none;
  width: 17px;
  height: 17px;
  border: 2px solid #666;
  border-radius: 50%;
  background: #f0f0f0;
}
.fit { margin-left: 19px; }
.mark {
  position: absolute;
  right: 84px;
  bottom: 3px;
  z-index: 2;
  pointer-events: none;
  fill: #fffffff0;
  opacity: 0.8;
  filter: drop-shadow(0 0 2px #00000080);
}
.latin { font: 700 78px 'Liberation Sans', sans-serif; }
.du {
  font: 700 49px 'Liberation Sans', sans-serif;
  fill: #fff;
  stroke: #aaa;
  stroke-width: 2px;
}
.cjk { font: 900 59px 'Noto Sans CJK SC', sans-serif; }
.url { font: 500 40px 'Noto Sans', sans-serif; }
</style>
